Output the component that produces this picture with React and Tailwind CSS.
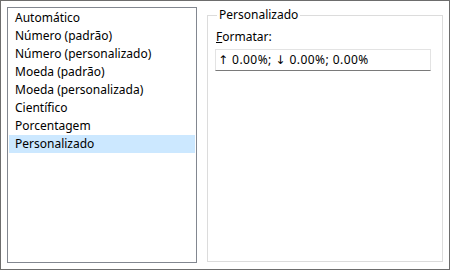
const items = [
  "Automático",
  "Número (padrão)",
  "Número (personalizado)",
  "Moeda (padrão)",
  "Moeda (personalizada)",
  "Científico",
  "Porcentagem",
  "Personalizado",
];

export default function App() {
  const selected = "Personalizado";

  return (
    <div
      className="w-[450px] h-[270px] border border-[#6d6d6d] bg-white p-[6px] flex gap-[10px] text-[12px] text-black"
      style={{ fontFamily: '"Noto Sans", "DejaVu Sans", sans-serif' }}
    >
      <ul className="w-[190px] h-[256px] border border-[#828790] p-[1px]">
        {items.map((item) => (
          <li
            key={item}
            className={
              "h-[18px] leading-[18px] pl-[6px] " +
              (item === selected ? "bg-[#cce8ff]" : "")
            }
          >
            {item}
          </li>
        ))}
      </ul>
      <fieldset className="w-[236px] h-[255px] border border-[#dcdcdc] px-[8px]">
        <legend className="ml-[1px] px-[2px] leading-[16px]">Personalizado</legend>
        <div className="mt-[6px] leading-[16px]">
          <span className="underline">F</span>ormatar:
        </div>
        <div className="mt-[4px] -ml-[1px] w-[216px] h-[22px] border border-[#e3e3e3] border-b-[#7a7a7a] px-[2px] leading-[20px] tracking-[0.45px]">
          ↑ 0.00%; ↓ 0.00%; 0.00%
        </div>
      </fieldset>
    </div>
  );
}
